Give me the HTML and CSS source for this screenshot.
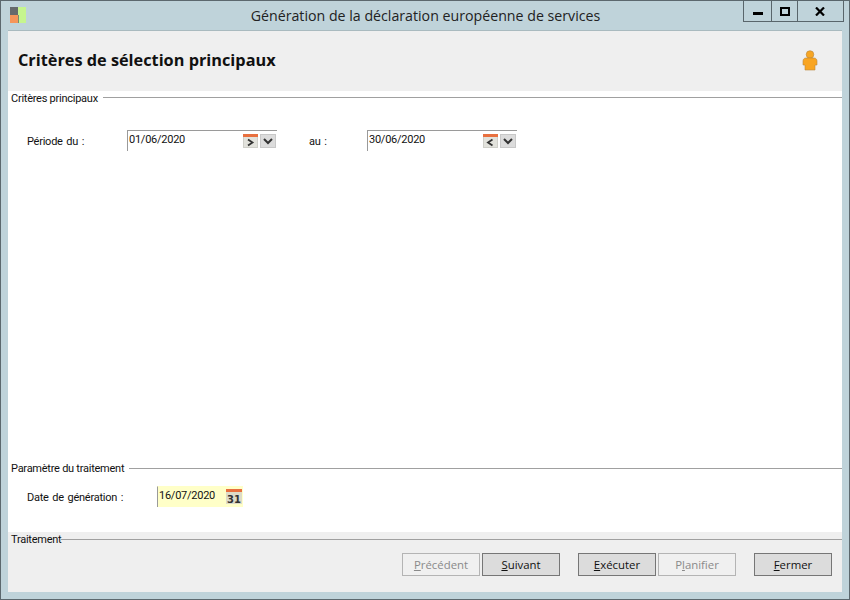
FILE: index.html
```html
<!DOCTYPE html>
<html lang="fr">
<head>
<meta charset="utf-8">
<title>Génération de la déclaration européenne de services</title>
<link rel="stylesheet" href="styles.css">
</head>
<body>
<div class="window">
  <header class="titlebar">
    <div class="title-left">
      <svg class="app-icon" width="16" height="16" viewBox="0 0 16 16"><rect x="0" y="0" width="8" height="8" fill="#666a6c"/><rect x="0" y="8" width="8" height="8" fill="#f5955a"/><rect x="8" y="0" width="8" height="16" fill="#c6f58e"/><rect x="8" y="8" width="1" height="8" fill="#7a8a70"/></svg>
    </div>
    <div class="title-text">Génération de la déclaration européenne de services</div>
    <div class="controls">
      <div class="ctl ctl-min"><svg width="10" height="4" viewBox="0 0 10 4"><rect width="10" height="3" y="1" fill="#000"/></svg></div>
      <div class="ctl ctl-max"><svg width="10" height="9" viewBox="0 0 10 9"><rect x="1" y="1" width="8" height="7" fill="none" stroke="#000" stroke-width="2"/></svg></div>
      <div class="ctl ctl-close"><svg width="10" height="9" viewBox="0 0 10 9"><path d="M1 .5 9 8.500M9 .5 1 8.500" stroke="#000" stroke-width="2.200" fill="none"/></svg></div>
    </div>
  </header>
  <div class="client">
    <section class="head">
      <h1>Critères de sélection principaux</h1>
      <svg class="user-icon" width="16" height="21" viewBox="0 0 16 21"><circle cx="8" cy="4.500" r="3.800" fill="#f7a624" stroke="#b8863c" stroke-width=".6"/><path d="M4 8h8c2 0 3 1.500 3 3v4h-2v5H3v-5H1v-4c0-1.500 1-3 3-3z" fill="#f9a521" stroke="#b8863c" stroke-width=".6"/></svg>
    </section>
    <main class="body">
      <div class="group group-main">
        <div class="legend"><span>Critères principaux</span><i class="rule"></i></div>
        <div class="period">
          <label class="lbl lbl-from">Période du :</label>
          <div class="date">
            <span class="date-val">01/06/2020</span>
            <svg class="ico" width="15" height="14" viewBox="0 0 15 14"><rect x=".5" y=".5" width="14" height="13" fill="#e2e2dc" stroke="#cfcfc9"/><rect width="15" height="3" fill="#e8703f"/><path d="M5 5.500 9.500 8.500 5 11.500" fill="none" stroke="#333" stroke-width="1.800"/></svg>
            <svg class="ico drop" width="16" height="14" viewBox="0 0 16 14"><rect x=".5" y=".5" width="15" height="13" fill="#dcdcdc" stroke="#c8c8c8"/><path d="M4 5 8 9 12 5" fill="none" stroke="#333" stroke-width="2"/></svg>
          </div>
          <label class="lbl lbl-to">au :</label>
          <div class="date">
            <span class="date-val">30/06/2020</span>
            <svg class="ico" width="15" height="14" viewBox="0 0 15 14"><rect x=".5" y=".5" width="14" height="13" fill="#e2e2dc" stroke="#cfcfc9"/><rect width="15" height="3" fill="#e8703f"/><path d="M9.500 5.500 5 8.500 9.500 11.500" fill="none" stroke="#333" stroke-width="1.800"/></svg>
            <svg class="ico drop" width="16" height="14" viewBox="0 0 16 14"><rect x=".5" y=".5" width="15" height="13" fill="#dcdcdc" stroke="#c8c8c8"/><path d="M4 5 8 9 12 5" fill="none" stroke="#333" stroke-width="2"/></svg>
          </div>
        </div>
      </div>
      <div class="group group-param">
        <div class="legend"><span>Paramètre du traitement</span><i class="rule"></i></div>
        <div class="gen-row">
          <label class="lbl lbl-gen">Date de génération :</label>
          <div class="date date-yellow">
            <span class="date-val">16/07/2020</span>
            <svg class="ico" width="16" height="15" viewBox="0 0 16 15"><rect width="16" height="15" fill="#dddbc8"/><rect width="16" height="3" fill="#e8703f"/><text x="8" y="13.500" class="cal-num">31</text></svg>
          </div>
        </div>
      </div>
    </main>
    <footer class="foot">
      <div class="legend legend-tight"><span>Traitement</span><i class="rule"></i></div>
      <div class="buttons">
        <button class="btn" disabled><u>P</u>récédent</button>
        <button class="btn"><u>S</u>uivant</button>
        <button class="btn gap"><u>E</u>xécuter</button>
        <button class="btn" disabled>P<u>l</u>anifier</button>
        <button class="btn gap"><u>F</u>ermer</button>
      </div>
    </footer>
  </div>
</div>
</body>
</html>
```
FILE: styles.css
```css
* { box-sizing: border-box; }
html, body { margin: 0; padding: 0; }
body {
  width: 850px;
  height: 600px;
  overflow: hidden;
  font-family: "Roboto", "Liberation Sans", sans-serif;
  font-size: 11px;
  letter-spacing: -0.25px;
  color: #111;
}
.window {
  width: 850px;
  height: 600px;
  background: #bfd3da;
  border: 1px solid #5c686e;
  padding: 0 7px 7px;
  display: flex;
  flex-direction: column;
}
.titlebar {
  height: 29px;
  flex: none;
  display: grid;
  grid-template-columns: 1fr auto 1fr;
  align-items: start;
  margin-right: -2px;
}
.title-left { padding: 6px 0 0 2px; }
.app-icon { display: block; }
.title-text {
  font-family: "Open Sans", "Liberation Sans", sans-serif;
  font-size: 14.200px;
  letter-spacing: 0;
  line-height: 29px;
  color: #222;
  white-space: nowrap;
  margin-left: -1px;
}
.controls {
  justify-self: end;
  display: flex;
  height: 22px;
  width: 101px;
  margin-top: -1px;
  border: 1px solid #59656b;
}
.ctl {
  display: flex;
  align-items: center;
  justify-content: center;
  height: 20px;
}
.ctl-min { width: 28px; border-right: 1px solid #59656b; padding-top: 4px; }
.ctl-max { width: 26px; border-right: 1px solid #59656b; }
.ctl-close { flex: 1; padding-right: 2px; }
.client {
  flex: 1;
  min-height: 0;
  display: flex;
  flex-direction: column;
  border-top: 1px solid #a9babf;
  background: #fff;
}
.head {
  height: 60px;
  flex: none;
  background: #efefef;
  display: flex;
  align-items: center;
  justify-content: space-between;
  padding: 0 24px 2px 10px;
}
.head h1 {
  margin: 0;
  font-family: "Open Sans", "DejaVu Sans", sans-serif;
  font-weight: 700;
  font-size: 16.300px;
  letter-spacing: 0;
  color: #111;
}
.user-icon { display: block; }
.body {
  flex: 1;
  display: flex;
  flex-direction: column;
  justify-content: space-between;
  background: #fff;
}
.legend {
  display: flex;
  align-items: center;
  gap: 5px;
  height: 14px;
  padding-left: 3px;
  line-height: 14px;
  white-space: nowrap;
}
.group-main .legend span { margin-top: 2px; }
.rule {
  flex: 1;
  height: 1px;
  background: #a0a0a0;
  margin-top: -1px;
}
.legend-tight { gap: 0; }
.period {
  display: flex;
  align-items: flex-start;
  padding: 25px 0 0 19px;
}
.lbl { line-height: 16px; padding-top: 4px; white-space: nowrap; display: block; word-spacing: 1.200px; }
.lbl-from { width: 100px; }
.lbl-to { width: 59px; margin-left: 31px; padding-left: 1px; }
.date {
  width: 150px;
  height: 21px;
  display: flex;
  align-items: flex-start;
  border-top: 1px solid #9a9a9a;
  border-left: 1px solid #9a9a9a;
  background: #fff;
}
.date-val {
  flex: 1;
  line-height: 16px;
  padding: 1px 0 0 1px;
}
.ico { flex: none; margin-top: 3px; display: block; }
.drop { margin-left: 2px; margin-right: 1px; }
.group-param { padding-bottom: 25px; }
.gen-row {
  display: flex;
  align-items: flex-start;
  padding: 10px 0 0 19px;
}
.lbl-gen { width: 130px; }
.date-yellow {
  width: 86px;
  background: #ffffc8;
  border-top-color: #ffffc8;
}
.date-yellow .ico { margin-top: 2px; margin-right: 1px; }
.cal-num { font-family: "DejaVu Sans", sans-serif; font-weight: 700; font-size: 10px; letter-spacing: 0; text-anchor: middle; fill: #333; }
.foot {
  height: 60px;
  flex: none;
  background: #efefef;
  padding-top: 1px;
}
.buttons {
  display: flex;
  justify-content: flex-end;
  padding: 6px 10px 0 0;
  gap: 2px;
}
.btn {
  width: 78px;
  height: 23px;
  padding: 0;
  border: 1px solid #767676;
  background: #dcdcdc;
  font-family: "Open Sans", "Liberation Sans", sans-serif;
  font-size: 11.400px;
  letter-spacing: 0;
  color: #111;
}
.btn:disabled {
  background: #f0f0f0;
  border-color: #b4b4b4;
  color: #8a8a8a;
}
.gap { margin-left: 16px; }
```
